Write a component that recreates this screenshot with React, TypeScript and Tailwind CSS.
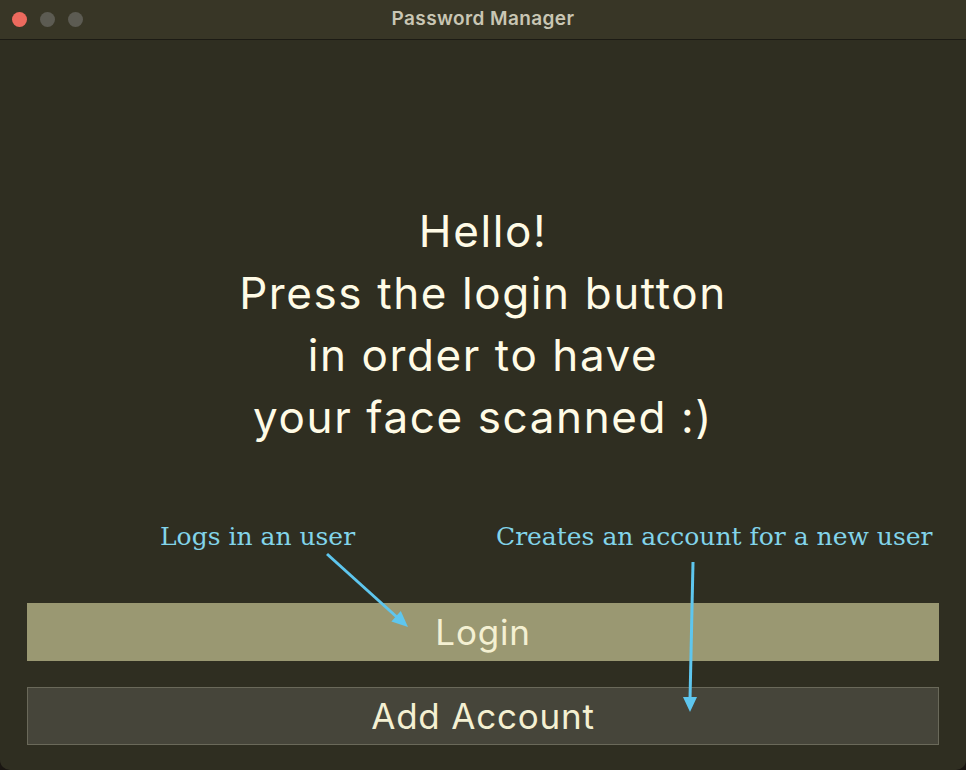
import React from "react";

function TrafficLights() {
	return (
		<div className="flex items-center gap-[13px] pl-[12px]">
			<span className="h-[15px] w-[15px] rounded-full bg-[#ec6a5e]" />
			<span className="h-[15px] w-[15px] rounded-full bg-[#5c5b52]" />
			<span className="h-[15px] w-[15px] rounded-full bg-[#5c5b52]" />
		</div>
	);
}

function Arrows() {
	return (
		<svg
			className="pointer-events-none absolute inset-0"
			width="966"
			height="770"
			viewBox="0 0 966 770"
		>
			<line x1="327" y1="554" x2="399" y2="619" stroke="#5ec6ee" strokeWidth="3" />
			<polygon points="408,627 400.8,611.1 391.4,621.5" fill="#5ec6ee" />
			<line x1="693" y1="562" x2="690" y2="700" stroke="#5ec6ee" strokeWidth="3" />
			<polygon points="690,712 683,697 697,697" fill="#5ec6ee" />
		</svg>
	);
}

export default function App() {
	return (
		<div className="h-[770px] w-[966px] bg-[#1a1612]">
			<div className="relative flex h-full flex-col overflow-hidden rounded-b-[10px] bg-[#2f2e21] font-['Inter',sans-serif]">
				<header className="relative flex h-[40px] shrink-0 items-center border-b border-[#1c1b14] bg-[#383626]">
					<TrafficLights />
					<div className="absolute inset-x-0 text-center text-[19px] font-semibold tracking-[0.4px] text-[#c9c6b4]">
						Password Manager
					</div>
				</header>

				<main className="flex flex-1 flex-col">
					<div className="pt-[160px] text-center text-[44px] leading-[62px] tracking-[1.6px] text-[#fffbe6]">
						<p>Hello!</p>
						<p>Press the login button</p>
						<p>in order to have</p>
						<p>your face scanned :)</p>
					</div>

					<div className="mt-auto flex flex-col gap-[26px] px-[27px] pb-[25px]">
						<button className="h-[58px] w-full bg-[#9a9872] text-[35px] tracking-[0.8px] text-[#f4f0d2]">
							Login
						</button>
						<button className="h-[58px] w-full border border-[#6a695a] bg-[#46453a] text-[35px] tracking-[0.8px] text-[#f4f0d2]">
							Add Account
						</button>
					</div>
				</main>

				<span className="absolute left-[160px] top-[518px] font-['DejaVu_Serif',serif] text-[25px] text-[#82d4ea]">
					Logs in an user
				</span>
				<span className="absolute left-[496px] top-[518px] font-['DejaVu_Serif',serif] text-[25px] text-[#82d4ea]">
					Creates an account for a new user
				</span>
				<Arrows />
			</div>
		</div>
	);
}
